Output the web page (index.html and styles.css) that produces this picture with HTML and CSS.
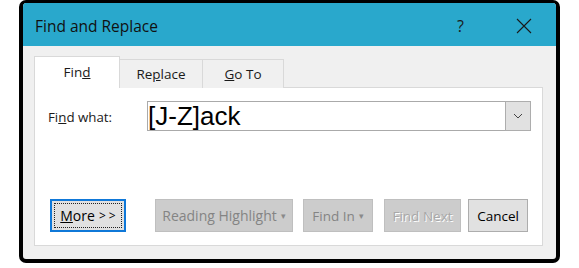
FILE: index.html
```html
<!DOCTYPE html>
<html>
<head>
<meta charset="utf-8">
<link rel="stylesheet" href="styles.css">
</head>
<body>
<div class="window">
  <div class="titlebar">
    <span class="title">Find and Replace</span>
    <span class="help">?</span>
    <span class="close">
      <svg width="16" height="16" viewBox="0 0 16 16"><path d="M1 1 L15 15 M15 1 L1 15" stroke="#1a1a1a" stroke-width="1.1" fill="none"/></svg>
    </span>
  </div>
  <div class="body">
    <div class="tabs">
      <div class="tab tab-find active">Fin<u>d</u></div>
      <div class="tab tab-replace">Re<u>p</u>lace</div>
      <div class="tab tab-goto"><u>G</u>o To</div>
    </div>
    <div class="panel">
      <div class="row">
        <span class="label">Fi<u>n</u>d what:</span>
        <div class="combo">
          <span class="value">[J-Z]ack</span>
          <span class="drop">
            <svg width="10" height="6" viewBox="0 0 10 6"><path d="M1 1 L5 5 L9 1" stroke="#444" stroke-width="1" fill="none"/></svg>
          </span>
        </div>
      </div>
      <div class="buttons">
        <div class="btn btn-more"><span class="focus"><u>M</u>ore <span class="gt">&gt; &gt;</span></span></div>
        <div class="btn btn-disabled btn-reading">Reading Highlight<span class="caret">&#9662;</span></div>
        <div class="btn btn-disabled btn-findin">Find In<span class="caret">&#9662;</span></div>
        <div class="btn btn-disabled btn-next">Find Next</div>
        <div class="btn btn-cancel">Cancel</div>
      </div>
    </div>
  </div>
</div>
</body>
</html>
```
FILE: styles.css
```css
html, body {
  margin: 0;
  padding: 0;
  background: #ffffff;
}
body {
  font-family: "Open Sans", "Noto Sans", sans-serif;
  color: #000;
}
.window {
  box-sizing: border-box;
  margin-left: 19px;
  width: 541px;
  height: 263px;
  border: 4px solid #000;
  border-top-width: 3px;
  border-radius: 7px;
  background: #f0f0f0;
  overflow: hidden;
  display: flex;
  flex-direction: column;
}
.titlebar {
  height: 43px;
  flex: none;
  background: #29a8cc;
  display: flex;
  align-items: center;
  padding-left: 12px;
}
.title {
  font-size: 15.5px;
  color: #111;
  padding-top: 2px;
}
.help {
  margin-left: auto;
  font-size: 16px;
  color: #1a1a1a;
  padding-top: 2px;
}
.close {
  width: 16px;
  height: 16px;
  margin-left: 52px;
  margin-right: 24px;
  display: flex;
  margin-top: 2px;
}
.body {
  flex: 1;
  padding: 11px 13px 13px 11px;
  display: flex;
  flex-direction: column;
}
.tabs {
  display: flex;
  align-items: flex-end;
  height: 31px;
  flex: none;
  position: relative;
  z-index: 1;
  margin-bottom: -1px;
}
.tab {
  box-sizing: border-box;
  height: 29px;
  border: 1px solid #d9d9d9;
  border-bottom: none;
  background: #f0f0f0;
  font-size: 13.5px;
  color: #1a1a1a;
  display: flex;
  align-items: center;
  justify-content: center;
  margin-left: -1px;
}
.tab.active {
  height: 32px;
  background: #fff;
  padding-bottom: 2px;
}
.tab-find { width: 86px; margin-left: 0; }
.tab-replace { width: 84px; }
.tab-goto { width: 82px; }
.panel {
  flex: 1;
  background: #fff;
  border: 1px solid #d9d9d9;
  display: flex;
  flex-direction: column;
  padding: 13px 10px 13px 0;
}
.row {
  display: flex;
  align-items: center;
  height: 30px;
}
.label {
  flex: none;
  width: 99px;
  margin-left: 13px;
  font-size: 13.3px;
  color: #1a1a1a;
  padding-top: 2px;
}
.combo {
  flex: none;
  box-sizing: border-box;
  width: 384px;
  height: 30px;
  border: 1px solid #aaaaaa;
  display: flex;
  align-items: center;
}
.value {
  flex: 1;
  font-family: "Liberation Sans", Arial, sans-serif;
  font-size: 26px;
  line-height: 28px;
  color: #000;
}
.drop {
  box-sizing: border-box;
  width: 26px;
  height: 30px;
  margin: -1px -1px -1px 0;
  background: #e1e1e1;
  border: 1px solid #adadad;
  display: flex;
  align-items: center;
  justify-content: center;
}
.buttons {
  margin-top: auto;
  display: flex;
  height: 33px;
}
.btn {
  box-sizing: border-box;
  flex: none;
  height: 33px;
  display: flex;
  align-items: center;
  justify-content: center;
  font-size: 14px;
  border: 1px solid #adadad;
  background: #e1e1e1;
}
.btn-more {
  width: 76px;
  margin-left: 15px;
  border: 2px solid #0f78d8;
  padding: 2px;
}
.focus {
  box-sizing: border-box;
  width: 100%;
  height: 100%;
  border: 1px dotted #222;
  display: flex;
  align-items: center;
  justify-content: center;
  color: #000;
}
.gt {
  font-size: 12px;
  margin-left: 4px;
}
.btn-disabled {
  background: #cccccc;
  border-color: #bfbfbf;
  color: #848484;
}
.btn-reading { width: 138px; margin-left: 29px; }
.btn-findin { width: 70px; margin-left: 10px; font-size: 13.5px; }
.btn-next {
  width: 77px;
  margin-left: 11px;
  font-size: 13.5px;
  color: #a8a8a8;
  text-shadow: 1px 1px 0 #ffffff;
}
.caret {
  font-size: 9px;
  margin-left: 4px;
  color: #8a8a8a;
}
.btn-cancel {
  width: 60px;
  margin-left: 7px;
  font-size: 13.5px;
  color: #000;
}
```
